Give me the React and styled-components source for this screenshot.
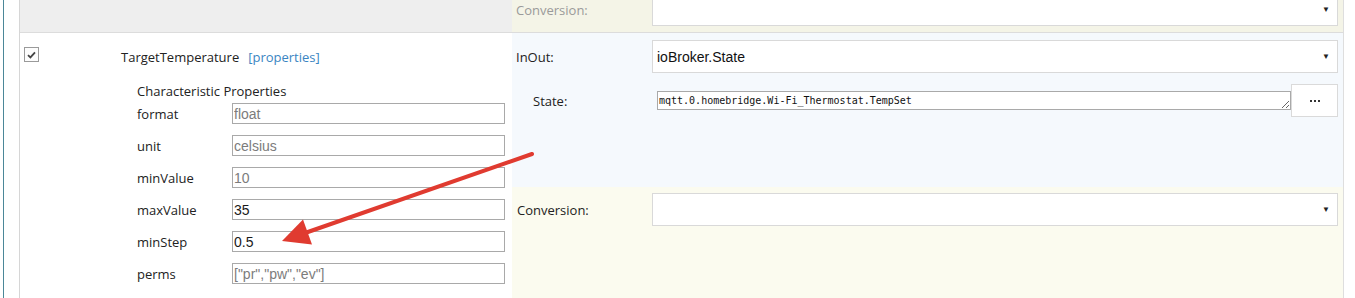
import React from "react";
import styled, { createGlobalStyle } from "styled-components";

const GlobalStyle = createGlobalStyle`
  html, body {
    margin: 0;
    padding: 0;
    background: #fff;
  }
  body {
    font-family: "Open Sans", "Noto Sans", sans-serif;
    font-size: 13px;
    color: #222;
  }
  *, *::before, *::after {
    box-sizing: border-box;
  }
`;

const Page = styled.div`
  position: relative;
  height: 298px;
  overflow: hidden;
  padding-left: 3px;
`;

const Frame = styled.div`
  height: 100%;
  border-left: 1px solid #4b8798;
  padding-left: 15px;
`;

const Table = styled.div`
  display: grid;
  grid-template-columns: 492px 832px;
  grid-template-rows: 33px 1fr;
  width: max-content;
  height: 100%;
  border-left: 1px solid #d6d6d6;
`;

const HeaderCell = styled.div`
  background: ${(p) => p.$bg};
  border-bottom: 1px solid #dcdcdc;
  border-right: ${(p) => (p.$edge ? "1px solid #dedede" : "none")};
  overflow: hidden;
`;

const ItemCell = styled.div`
  padding: 14px 0 0 4px;
`;

const NameRow = styled.div`
  display: flex;
  align-items: flex-start;
`;

const CheckBox = styled.span`
  width: 15px;
  height: 15px;
  border: 1px solid #9a9a9a;
  background: #fdfdfd;
  display: flex;
  align-items: center;
  justify-content: center;
`;

const Name = styled.span`
  margin: 1px 0 0 82px;
  line-height: 18px;
`;

const PropsLink = styled.span`
  margin-left: 9px;
  color: #3a85c2;
`;

const PropsBlock = styled.div`
  margin: 16px 0 0 113px;
`;

const PropsTitle = styled.div`
  line-height: 18px;
`;

const PropsGrid = styled.div`
  margin-top: 3px;
  display: grid;
  grid-template-columns: 95px 273px;
  grid-auto-rows: 21px;
  row-gap: 11px;
  align-items: center;
`;

const PropInput = styled.input`
  width: 273px;
  height: 21px;
  margin: 0;
  padding: 0 1px;
  border: 1px solid #a9a9a9;
  border-radius: 0;
  background: #fff;
  font-family: "Liberation Sans", Arial, sans-serif;
  font-size: 14px;
  color: ${(p) => (p.$muted ? "#7c7c7c" : "#1a1a1a")};
  outline: none;
`;

const BindingCell = styled.div`
  display: flex;
  flex-direction: column;
  border-right: 1px solid #dedede;
`;

const Section = styled.div`
  background: ${(p) => p.$bg};
  height: ${(p) => p.$h || "auto"};
  flex: ${(p) => (p.$h ? "none" : "1")};
  padding-top: ${(p) => p.$pt}px;
`;

const FieldRow = styled.div`
  display: flex;
  align-items: center;
  margin-top: ${(p) => p.$mt || 0}px;
`;

const FieldLabel = styled.div`
  width: ${(p) => p.$w}px;
  padding-left: ${(p) => p.$pl}px;
  color: ${(p) => (p.$muted ? "#9a9a9a" : "#222")};
  flex: none;
`;

const Select = styled.div`
  width: 686px;
  height: 33px;
  border: 1px solid #d9d9d9;
  background: #fff;
  display: flex;
  align-items: center;
  justify-content: space-between;
  padding: 0 7px 0 4px;
  font-family: "Liberation Sans", Arial, sans-serif;
  font-size: 14px;
  color: #111;
`;

const Caret = styled.span`
  font-size: 8px;
  color: #222;
`;

const StateArea = styled.textarea`
  width: 634px;
  height: 19px;
  margin: 0;
  padding: 1px 1px;
  border: 1px solid #a9a9a9;
  border-radius: 0;
  font-family: "DejaVu Sans Mono", "Liberation Mono", monospace;
  font-size: 10px;
  line-height: 15px;
  color: #111;
  overflow: hidden;
  resize: both;
  outline: none;
`;

const DotsButton = styled.button`
  width: 47px;
  height: 33px;
  margin: 0;
  border: 1px solid #dadada;
  background: #fff;
  display: flex;
  align-items: center;
  justify-content: center;
  gap: 2px;
  padding: 0;
`;

const Dot = styled.span`
  width: 2px;
  height: 2px;
  background: #333;
`;

const Overlay = styled.svg`
  position: absolute;
  left: 0;
  top: 0;
  pointer-events: none;
`;

const props = [
  { name: "format", value: "float", muted: true },
  { name: "unit", value: "celsius", muted: true },
  { name: "minValue", value: "10", muted: true },
  { name: "maxValue", value: "35" },
  { name: "minStep", value: "0.5" },
  { name: "perms", value: '["pr","pw","ev"]', muted: true },
];

export default function App() {
  return (
    <>
      <GlobalStyle />
      <Page>
        <Frame>
          <Table>
            <HeaderCell $bg="#eeeeee" />
            <HeaderCell $bg="#f4f4e7" $edge>
              <FieldRow $mt={-7}>
                <FieldLabel $w={140} $pl={4} $muted>
                  Conversion:
                </FieldLabel>
                <Select>
                  <span />
                  <Caret>▼</Caret>
                </Select>
              </FieldRow>
            </HeaderCell>

            <ItemCell>
              <NameRow>
                <CheckBox>
                  <svg width="9" height="8" viewBox="0 0 9 8">
                    <path
                      d="M1 4.2 L3.4 6.4 L8 1.4"
                      fill="none"
                      stroke="#444"
                      strokeWidth="1.8"
                    />
                  </svg>
                </CheckBox>
                <Name>
                  TargetTemperature
                  <PropsLink>[properties]</PropsLink>
                </Name>
              </NameRow>
              <PropsBlock>
                <PropsTitle>Characteristic Properties</PropsTitle>
                <PropsGrid>
                  {props.map((p) => (
                    <React.Fragment key={p.name}>
                      <span>{p.name}</span>
                      <PropInput readOnly value={p.value} $muted={p.muted} />
                    </React.Fragment>
                  ))}
                </PropsGrid>
              </PropsBlock>
            </ItemCell>

            <BindingCell>
              <Section $bg="#f5f9fd" $h="154px" $pt={7}>
                <FieldRow>
                  <FieldLabel $w={140} $pl={4}>
                    InOut:
                  </FieldLabel>
                  <Select>
                    <span>ioBroker.State</span>
                    <Caret>▼</Caret>
                  </Select>
                </FieldRow>
                <FieldRow $mt={11}>
                  <FieldLabel $w={145} $pl={21}>
                    State:
                  </FieldLabel>
                  <StateArea
                    readOnly
                    rows={1}
                    value="mqtt.0.homebridge.Wi-Fi_Thermostat.TempSet"
                  />
                  <DotsButton>
                    <Dot />
                    <Dot />
                    <Dot />
                  </DotsButton>
                </FieldRow>
              </Section>
              <Section $bg="#fbfbef" $pt={6}>
                <FieldRow>
                  <FieldLabel $w={140} $pl={5}>
                    Conversion:
                  </FieldLabel>
                  <Select>
                    <span />
                    <Caret>▼</Caret>
                  </Select>
                </FieldRow>
              </Section>
            </BindingCell>
          </Table>
        </Frame>
        <Overlay width="1355" height="298" viewBox="0 0 1355 298">
          <line
            x1="532"
            y1="154"
            x2="305"
            y2="233"
            stroke="#e03b30"
            strokeWidth="4"
            strokeLinecap="round"
          />
          <polygon points="282,241 303,219.5 312,244.5" fill="#e03b30" />
        </Overlay>
      </Page>
    </>
  );
}
